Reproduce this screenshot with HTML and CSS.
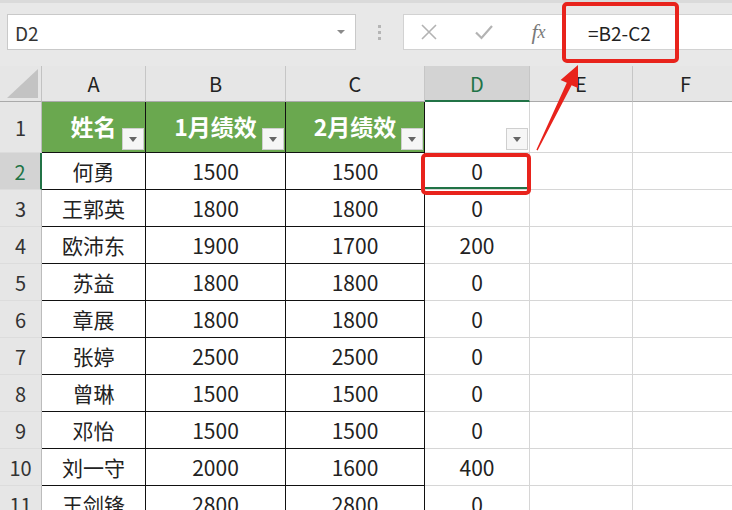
FILE: index.html
```html
<!DOCTYPE html>
<html lang="zh-CN">
<head>
    <meta charset="UTF-8">
    <title>绩效对比</title>
    <link rel="stylesheet" href="styles.css">
</head>
<body>
    <div class="page">
        <div class="toolbar">
            <div class="namebox">
                <span>D2</span>
                <span class="caret"></span>
            </div>
            <div class="grip"><i></i><i></i><i></i></div>
            <div class="fbar">
                <span class="fbtn first">
                    <svg width="16" height="16" viewBox="0 0 16 16"><path d="M1 1L15 15M15 1L1 15" stroke="#b3b3b3" stroke-width="1.6" fill="none"/></svg>
                </span>
                <span class="fbtn">
                    <svg width="18" height="16" viewBox="0 0 18 16"><path d="M1 8.5L6.5 14L17 2" stroke="#b3b3b3" stroke-width="2.2" fill="none"/></svg>
                </span>
                <span class="fbtn fx"><i>f</i><i>x</i></span>
                <span class="formula">=B2-C2</span>
            </div>
        </div>

        <div class="sheet">
            <div class="corner"></div>
            <div class="hd">A</div>
            <div class="hd">B</div>
            <div class="hd">C</div>
            <div class="hd sel">D</div>
            <div class="hd">E</div>
            <div class="hd">F</div>

            <div class="rh">1</div>
            <div class="c t th">姓名<span class="filter"></span></div>
            <div class="c t th">1月绩效<span class="filter"></span></div>
            <div class="c t th">2月绩效<span class="filter"></span></div>
            <div class="c"><span class="filter"></span></div>
            <div class="c"></div>
            <div class="c"></div>

            <div class="rh sel">2</div>
            <div class="c t">何勇</div>
            <div class="c t">1500</div>
            <div class="c t">1500</div>
            <div class="c active">0</div>
            <div class="c"></div>
            <div class="c"></div>

            <div class="rh">3</div>
            <div class="c t">王郭英</div>
            <div class="c t">1800</div>
            <div class="c t">1800</div>
            <div class="c">0</div>
            <div class="c"></div>
            <div class="c"></div>

            <div class="rh">4</div>
            <div class="c t">欧沛东</div>
            <div class="c t">1900</div>
            <div class="c t">1700</div>
            <div class="c">200</div>
            <div class="c"></div>
            <div class="c"></div>

            <div class="rh">5</div>
            <div class="c t">苏益</div>
            <div class="c t">1800</div>
            <div class="c t">1800</div>
            <div class="c">0</div>
            <div class="c"></div>
            <div class="c"></div>

            <div class="rh">6</div>
            <div class="c t">章展</div>
            <div class="c t">1800</div>
            <div class="c t">1800</div>
            <div class="c">0</div>
            <div class="c"></div>
            <div class="c"></div>

            <div class="rh">7</div>
            <div class="c t">张婷</div>
            <div class="c t">2500</div>
            <div class="c t">2500</div>
            <div class="c">0</div>
            <div class="c"></div>
            <div class="c"></div>

            <div class="rh">8</div>
            <div class="c t">曾琳</div>
            <div class="c t">1500</div>
            <div class="c t">1500</div>
            <div class="c">0</div>
            <div class="c"></div>
            <div class="c"></div>

            <div class="rh">9</div>
            <div class="c t">邓怡</div>
            <div class="c t">1500</div>
            <div class="c t">1500</div>
            <div class="c">0</div>
            <div class="c"></div>
            <div class="c"></div>

            <div class="rh">10</div>
            <div class="c t">刘一守</div>
            <div class="c t">2000</div>
            <div class="c t">1600</div>
            <div class="c">400</div>
            <div class="c"></div>
            <div class="c"></div>

            <div class="rh">11</div>
            <div class="c t">王剑锋</div>
            <div class="c t">2800</div>
            <div class="c t">2800</div>
            <div class="c">0</div>
            <div class="c"></div>
            <div class="c"></div>
        </div>

        <!-- annotations -->
        <div class="mark mark-formula"></div>
        <div class="mark mark-cell"></div>
        <svg class="arrow" width="732" height="510" viewBox="0 0 732 510">
            <polygon points="578,65 578,88 571.6,85.2 537.6,150.4 536.4,149.8 566.8,82.8 560.6,80" fill="#e8231c"/>
        </svg>
    </div>
</body>
</html>
```

FILE: styles.css
```css
body {
    margin: 0;
    font-family: "Noto Sans CJK SC", "Noto Sans", sans-serif;
    color: #222;
    background: #fff;
    overflow: hidden;
}
.page {
    position: relative;
    width: 732px;
    height: 510px;
    overflow: hidden;
}

/* top bar */
.toolbar {
    height: 66px;
    box-sizing: border-box;
    background: #e8e8e8;
    border-top: 3px solid #dadada;
    padding: 11px 0 0 7px;
    display: flex;
    align-items: flex-start;
}
.namebox {
    width: 349px;
    height: 36px;
    box-sizing: border-box;
    background: #fff;
    border: 1px solid #c9c9c9;
    display: flex;
    align-items: center;
    justify-content: space-between;
    padding: 0 10px 0 7px;
    font-size: 19px;
    color: #333;
}
.caret {
    width: 0;
    height: 0;
    border-left: 4px solid transparent;
    border-right: 4px solid transparent;
    border-top: 4px solid #8a8a8a;
}
.grip {
    width: 47px;
    height: 36px;
    display: flex;
    flex-direction: column;
    align-items: center;
    justify-content: center;
    gap: 3px;
}
.grip i {
    width: 3px;
    height: 3px;
    background: #b5b5b5;
}
.fbar {
    flex: 1;
    height: 36px;
    box-sizing: border-box;
    background: #fff;
    border: 1px solid #d2d2d2;
    border-right: none;
    display: flex;
    align-items: center;
}
.fbtn {
    width: 55px;
    display: flex;
    justify-content: center;
    align-items: center;
}
.fbtn.first {
    margin-left: -3px;
}
.fx {
    font-family: "Liberation Serif", serif;
    font-style: italic;
    font-size: 22px;
    color: #7a7a7a;
}
.fx i:last-child {
    font-size: 18px;
}
.formula {
    margin-left: 22px;
    font-size: 19px;
    color: #222;
}

/* grid */
.sheet {
    display: grid;
    grid-template-columns: 42px 104px 140px 139px 105px 103px 106px;
    grid-template-rows: 36px 51px repeat(10, 37px);
    font-size: 21px;
}
.sheet > div {
    box-sizing: border-box;
    display: flex;
    align-items: center;
    justify-content: center;
    position: relative;
}
.corner {
    background: #e6e6e6;
    border-right: 1px solid #c2c2c2;
    border-bottom: 1px solid #aaa;
}
.corner::after {
    content: "";
    position: absolute;
    right: 3px;
    bottom: 3px;
    width: 31px;
    height: 29px;
    background: #c3c3c3;
    clip-path: polygon(100% 0, 100% 100%, 0 100%);
}
.hd {
    background: #e6e6e6;
    border-right: 1px solid #c6c6c6;
    border-bottom: 1px solid #aaa;
    font-size: 20px;
    color: #222;
}
.hd.sel {
    background: #d3d3d3;
    color: #217346;
    border-bottom: 2px solid #217346;
}
.rh {
    background: #e6e6e6;
    border-right: 1px solid #bcbcbc;
    border-bottom: 1px solid #dcdcdc;
    font-size: 20px;
    color: #333;
}
.rh.sel {
    background: #d3d3d3;
    color: #217346;
    border-right: 2px solid #217346;
}
.c {
    border-right: 1px solid #d6d6d6;
    border-bottom: 1px solid #d6d6d6;
}
.c.t {
    border-right-color: #111;
    border-bottom-color: #111;
}
.th {
    background: #6aa84f;
    color: #fff;
    font-weight: bold;
    font-size: 23px;
    padding-bottom: 3px;
}
.active {
    box-shadow: inset 0 -2px 0 #217346;
}
.filter {
    position: absolute;
    right: 1px;
    bottom: 2px;
    width: 22px;
    height: 22px;
    box-sizing: border-box;
    background: #f6f6f6;
    border: 1px solid #cfcfcf;
}
.filter::after {
    content: "";
    position: absolute;
    left: 6px;
    top: 8px;
    border-left: 4px solid transparent;
    border-right: 4px solid transparent;
    border-top: 5px solid #666;
}

/* red annotations */
.mark {
    position: absolute;
    border: 4.5px solid #e8231c;
    border-radius: 5px;
    box-sizing: border-box;
}
.mark-formula {
    left: 562px;
    top: 2px;
    width: 117px;
    height: 61px;
}
.mark-cell {
    left: 421px;
    top: 153px;
    width: 110px;
    height: 42px;
}
.arrow {
    position: absolute;
    left: 0;
    top: 0;
    pointer-events: none;
}
```
